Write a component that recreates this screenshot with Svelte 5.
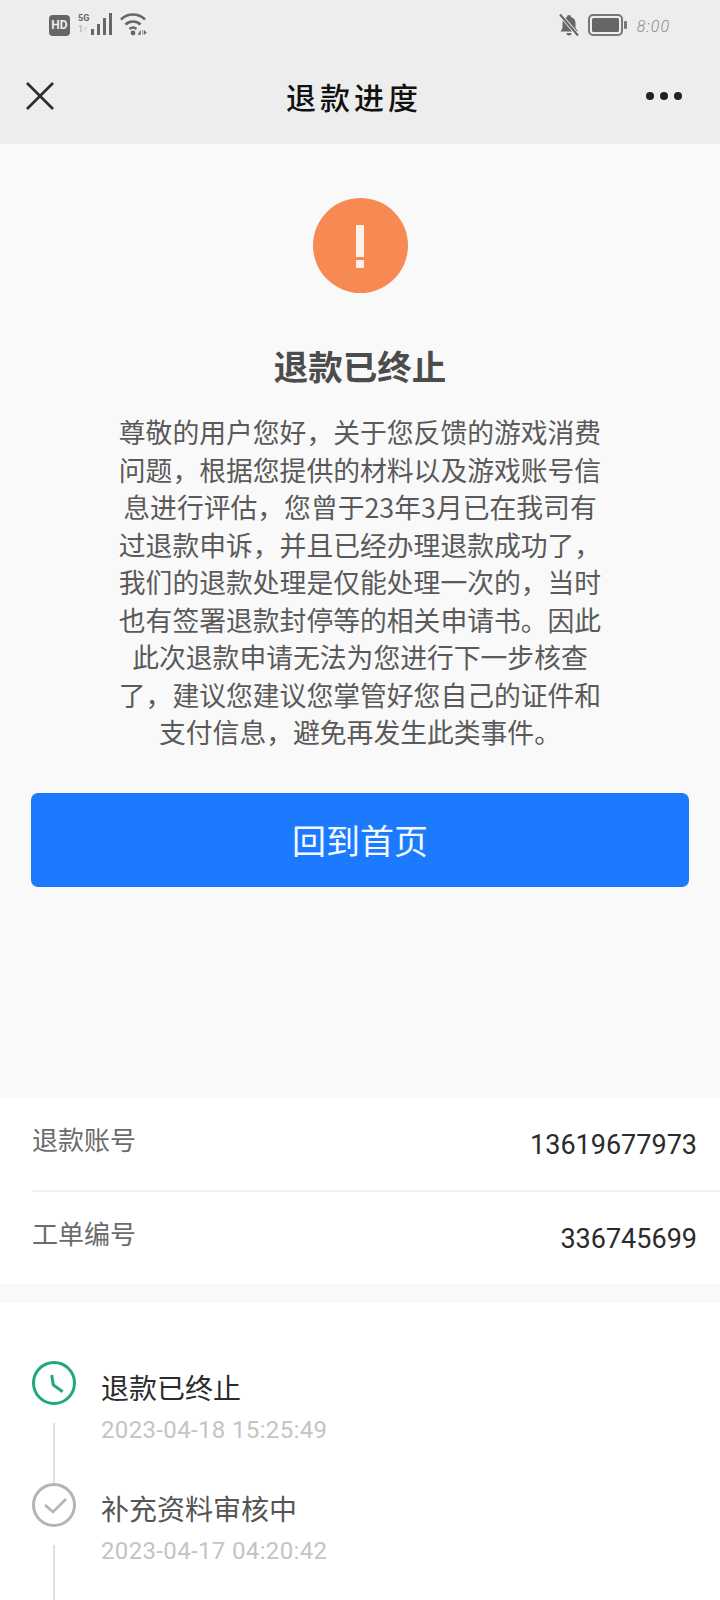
<script>
	const lines = [
		'尊敬的用户您好，关于您反馈的游戏消费',
		'问题，根据您提供的材料以及游戏账号信',
		'息进行评估，您曾于23年3月已在我司有',
		'过退款申诉，并且已经办理退款成功了，',
		'我们的退款处理是仅能处理一次的，当时',
		'也有签署退款封停等的相关申请书。因此',
		'此次退款申请无法为您进行下一步核查',
		'了，建议您建议您掌管好您自己的证件和',
		'支付信息，避免再发生此类事件。'
	];

	const info = [
		{ label: '退款账号', value: '13619677973' },
		{ label: '工单编号', value: '336745699' }
	];

	const steps = [
		{ title: '退款已终止', time: '2023-04-18 15:25:49', active: true },
		{ title: '补充资料审核中', time: '2023-04-17 04:20:42', active: false }
	];
</script>

<div class="page">
	<header class="top">
		<div class="status">
			<div class="status-left">
				<span class="hd">HD</span>
				<span class="net"><b>5G</b><i>1↑</i></span>
				<svg class="bars" width="24" height="23" viewBox="0 0 24 23" aria-hidden="true">
					<rect x="1" y="16" width="3" height="6" fill="#666" />
					<rect x="7" y="11" width="3" height="11" fill="#666" />
					<rect x="13" y="5" width="3" height="17" fill="#666" />
					<rect x="19" y="0" width="3" height="22" fill="#666" />
				</svg>
				<svg class="wifi" width="28" height="24" viewBox="0 0 28 24" fill="none" aria-hidden="true">
					<path d="M1 6.500a17 17 0 0 1 24 0" stroke="#666" stroke-width="2.600" />
					<path d="M5.500 11.500a11 11 0 0 1 15 0" stroke="#666" stroke-width="2.600" />
					<path d="M9.500 16a5.500 5.500 0 0 1 7 0" stroke="#666" stroke-width="2.400" />
					<circle cx="13" cy="20" r="2.400" fill="#666" />
					<path d="M18 21.500l2.500-4v4zM22.500 17v5M24 17.500l2.500 2-2.500 2z" fill="#666" stroke="#666" stroke-width="0.500" />
				</svg>
			</div>
			<div class="status-right">
				<svg width="24" height="24" viewBox="0 0 24 24" aria-hidden="true">
					<path d="M12 2a2 2 0 0 1 2 2c3 .8 4.500 3.200 4.500 6v5l2.500 3.500H3.500L5.500 15v-5c0-2.800 1.500-5.200 4.500-6a2 2 0 0 1 2-2zM9.500 20h5a2.500 2.500 0 0 1-5 0z" fill="#666" />
					<path d="M3 1.500l18 21" stroke="#ededed" stroke-width="4" />
					<path d="M3 1.500l18 21" stroke="#666" stroke-width="2" />
				</svg>
				<svg width="40" height="22" viewBox="0 0 40 22" aria-hidden="true">
					<rect x="1" y="1" width="33" height="20" rx="4" fill="none" stroke="#777" stroke-width="2" />
					<rect x="4" y="4" width="27" height="14" rx="1.500" fill="#666" />
					<rect x="36" y="7" width="3" height="8" rx="1" fill="#777" />
				</svg>
				<span class="clock">8:00</span>
			</div>
		</div>
		<nav class="nav">
			<svg width="28" height="28" viewBox="0 0 28 28" aria-hidden="true">
				<path d="M1 1l26 26M27 1L1 27" stroke="#2c2c2c" stroke-width="2.600" />
			</svg>
			<h1>退款进度</h1>
			<div class="dots"><span></span><span></span><span></span></div>
		</nav>
	</header>

	<section class="result">
		<div class="alert"><span class="bar"></span><span class="dot"></span></div>
		<h2>退款已终止</h2>
		<p>
			{#each lines as line}
				<span>{line}</span>
			{/each}
		</p>
		<button type="button">回到首页</button>
	</section>

	<section class="info">
		{#each info as row}
			<div class="row">
				<span class="label">{row.label}</span>
				<span class="value">{row.value}</span>
			</div>
		{/each}
	</section>

	<section class="timeline">
		{#each steps as step}
			<div class="step">
				<div class="rail">
					{#if step.active}
						<svg width="44" height="44" viewBox="0 0 44 44" fill="none" aria-hidden="true">
							<circle cx="22" cy="22" r="20.500" stroke="#22a67d" stroke-width="3" />
							<path d="M19.700 14l1.600 10 9.400 6.700" stroke="#22a67d" stroke-width="3" />
						</svg>
					{:else}
						<svg width="44" height="44" viewBox="0 0 44 44" fill="none" aria-hidden="true">
							<circle cx="22" cy="22" r="20.500" stroke="#b4b4b4" stroke-width="3" />
							<path d="M13 22l8 7 13-13" stroke="#b4b4b4" stroke-width="2.500" />
						</svg>
					{/if}
					<div class="line"></div>
				</div>
				<div class="body">
					<div class="title" class:active={step.active}>{step.title}</div>
					<div class="time">{step.time}</div>
				</div>
			</div>
		{/each}
	</section>
</div>

<style>
	:global(body) {
		margin: 0;
		background: #fff;
	}

	.page {
		width: 720px;
		height: 1600px;
		overflow: hidden;
		background: #f9f9f9;
		font-family: 'Noto Sans CJK SC', 'Noto Sans', sans-serif;
	}

	.top {
		height: 144px;
		background: #ededed;
	}

	.status {
		display: flex;
		justify-content: space-between;
		height: 50px;
		padding: 13px 50px 0 49px;
		box-sizing: border-box;
	}

	.status-left,
	.status-right {
		display: flex;
		align-items: flex-start;
	}

	.hd {
		width: 21px;
		height: 21px;
		margin-top: 2px;
		border-radius: 4px;
		background: #666;
		color: #eee;
		font: 700 12px/21px 'Roboto', sans-serif;
		text-align: center;
	}

	.net {
		display: flex;
		flex-direction: column;
		width: 12px;
		margin-left: 8px;
		font: 700 9px/11px 'Roboto', sans-serif;
		color: #666;
	}

	.net b {
		font-weight: 700;
	}

	.net i {
		font-style: normal;
		color: #bbb;
	}

	.wifi {
		margin-left: 6px;
	}

	.status-right svg:nth-child(2) {
		margin-left: 7px;
		margin-top: 1px;
	}

	.clock {
		margin: 4px 0 0 9px;
		color: #888;
		font: italic 300 16px/20px 'Roboto', sans-serif;
		letter-spacing: 1px;
	}

	.nav {
		display: flex;
		align-items: center;
		justify-content: space-between;
		height: 60px;
		margin-top: 16px;
		padding: 0 38px 0 26px;
	}

	.nav h1 {
		margin: 0 0 0 8px;
		font-size: 30px;
		line-height: 40px;
		font-weight: 500;
		letter-spacing: 4px;
		color: #111;
	}

	.dots {
		display: flex;
		gap: 6px;
	}

	.dots span {
		width: 8px;
		height: 8px;
		border-radius: 50%;
		background: #222;
	}

	.result {
		height: 954px;
		box-sizing: border-box;
		padding-top: 54px;
		display: flex;
		flex-direction: column;
		align-items: center;
	}

	.alert {
		width: 95px;
		height: 95px;
		border-radius: 50%;
		background: #f68a52;
		display: flex;
		flex-direction: column;
		align-items: center;
		padding-top: 27px;
		box-sizing: border-box;
		gap: 3px;
	}

	.bar {
		width: 8px;
		height: 32px;
		background: #fbf1ea;
	}

	.dot {
		width: 8px;
		height: 8px;
		background: #fbf1ea;
	}

	h2 {
		margin: 47px 0 0;
		font-size: 34.500px;
		line-height: 50px;
		font-weight: 700;
		color: #4c4c4c;
	}

	p {
		margin: 23px 0 0;
		display: flex;
		flex-direction: column;
		align-items: center;
		font-size: 26.800px;
		line-height: 37.500px;
		color: #5a5a5a;
	}

	button {
		width: 658px;
		height: 94px;
		margin-top: 42px;
		border: none;
		border-radius: 7px;
		background: #1c7aff;
		color: #f4f8ff;
		font-family: inherit;
		font-size: 34px;
	}

	.info {
		height: 186px;
		box-sizing: border-box;
		padding-left: 32px;
		background: #fff;
	}

	.row {
		display: flex;
		justify-content: space-between;
		height: 92px;
		padding-right: 23px;
		box-sizing: border-box;
		align-items: center;
	}

	.row + .row {
		height: 94px;
		border-top: 2px solid #f0f0f0;
	}

	.label {
		font-size: 26px;
		color: #6b6b6b;
		margin-top: -12px;
	}

	.value {
		font: 400 27px 'Roboto', sans-serif;
		color: #2b2b2b;
		margin-top: 2px;
	}

	.timeline {
		margin-top: 19px;
		padding: 58px 0 0 32px;
		background: #fff;
		height: 400px;
	}

	.step {
		display: flex;
		height: 122px;
	}

	.rail {
		width: 44px;
		display: flex;
		flex-direction: column;
		align-items: center;
	}

	.rail svg {
		flex: none;
	}

	.line {
		width: 2px;
		height: 64px;
		margin-top: 18px;
		background: #e0e0e0;
	}

	.body {
		margin-left: 25px;
	}

	.title {
		font-size: 28px;
		line-height: 40px;
		color: #555;
		margin-top: 6px;
	}

	.step + .step .title {
		margin-top: 5px;
	}

	.title.active {
		color: #2b2b2b;
	}

	.time {
		margin-top: 6px;
		font: 400 24px/34px 'Roboto', sans-serif;
		letter-spacing: 0.350px;
		color: #c4c4c4;
	}
</style>
